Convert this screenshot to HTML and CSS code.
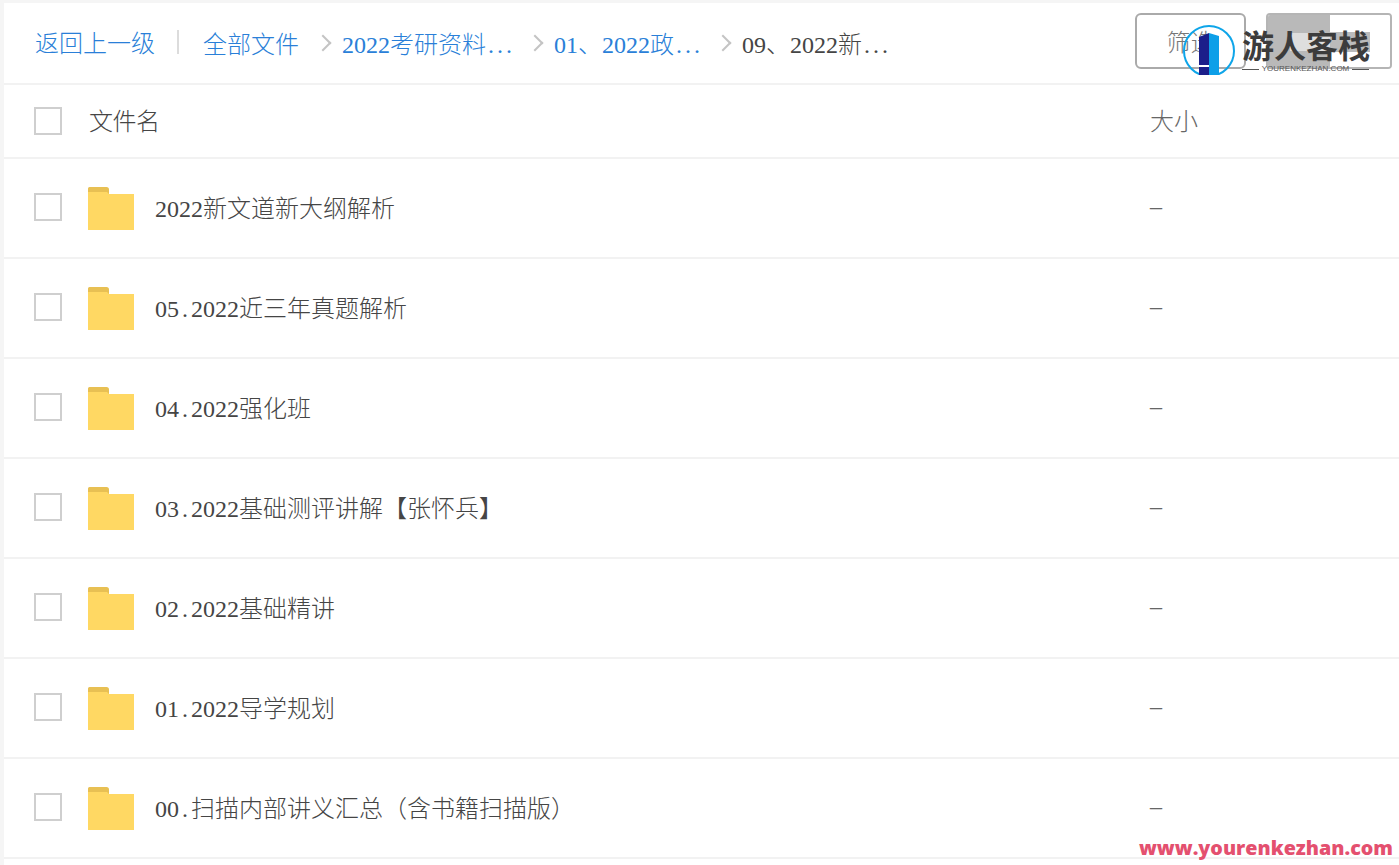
FILE: index.html
```html
<!DOCTYPE html>
<html>
<head>
    <meta charset="utf-8">
    <title>全部文件</title>
    <link rel="stylesheet" href="styles.css">
</head>
<body>
	<svg class="defs">
		<symbol id="folder" viewBox="0 0 46 43"><path fill="#e8c053" d="M0 1.500a1.500 1.500 0 0 1 1.500-1.500h17a2.500 2.500 0 0 1 2.500 2.500v4.500H0z"/><path fill="#ffd863" d="M0 5h19l2 2h25v36H0z"/></symbol>
	</svg>
	<div class="page">
		<div class="crumbs">
			<a class="link back" href="#">返回上一级</a>
			<a class="link all" href="#">全部文件</a>
			<i class="arrow"></i>
			<a class="link" href="#"><span class="en">2022</span>考研资料<span class="dots">...</span></a>
			<i class="arrow"></i>
			<a class="link" href="#"><span class="en">01</span>、<span class="en">2022</span>政<span class="dots">...</span></a>
			<i class="arrow"></i>
			<span class="current"><span class="en">09</span>、<span class="en">2022</span>新<span class="dots">...</span></span>
			<div class="tools">
				<a class="filter" href="#">筛选</a>
				<div class="switch">
					<span class="switch-on"><i class="switch-bar"></i></span>
					<span class="switch-off"><i class="switch-block"></i></span>
				</div>
			</div>
		</div>
		<div class="row head">
			<span class="check"></span>
			<span class="name">文件名</span>
			<span class="size">大小</span>
		</div>
		<div class="row">
			<span class="check"></span>
			<svg class="folder"><use href="#folder"/></svg>
			<span class="name"><span class="en">2022</span>新文道新大纲解析</span>
			<span class="size en">–</span>
		</div>
		<div class="row">
			<span class="check"></span>
			<svg class="folder"><use href="#folder"/></svg>
			<span class="name"><span class="en">05<span class="dot">.</span>2022</span>近三年真题解析</span>
			<span class="size en">–</span>
		</div>
		<div class="row">
			<span class="check"></span>
			<svg class="folder"><use href="#folder"/></svg>
			<span class="name"><span class="en">04<span class="dot">.</span>2022</span>强化班</span>
			<span class="size en">–</span>
		</div>
		<div class="row">
			<span class="check"></span>
			<svg class="folder"><use href="#folder"/></svg>
			<span class="name"><span class="en">03<span class="dot">.</span>2022</span>基础测评讲解【张怀兵】</span>
			<span class="size en">–</span>
		</div>
		<div class="row">
			<span class="check"></span>
			<svg class="folder"><use href="#folder"/></svg>
			<span class="name"><span class="en">02<span class="dot">.</span>2022</span>基础精讲</span>
			<span class="size en">–</span>
		</div>
		<div class="row">
			<span class="check"></span>
			<svg class="folder"><use href="#folder"/></svg>
			<span class="name"><span class="en">01<span class="dot">.</span>2022</span>导学规划</span>
			<span class="size en">–</span>
		</div>
		<div class="row">
			<span class="check"></span>
			<svg class="folder"><use href="#folder"/></svg>
			<span class="name"><span class="en">00<span class="dot">.</span></span>扫描内部讲义汇总（含书籍扫描版）</span>
			<span class="size en">–</span>
		</div>
	</div>
	<div class="logo">
		<svg class="logo-mark" viewBox="0 0 52 50"><circle fill="none" stroke="#0ea5e9" stroke-width="2" cx="26" cy="26" r="25"/><path fill="#1c1f8a" d="M16 12l10-4v42H16z"/><path fill="#0d9fe8" d="M26 8l10 3v39H26z"/><path fill="#fff" d="M16 40h10v2H16z"/></svg>
		<div class="logo-text">
			<div class="logo-cn">游人客栈</div>
			<div class="logo-en">YOURENKEZHAN.COM</div>
		</div>
	</div>
	<div class="site">www.yourenkezhan.com</div>
</body>
</html>
```

FILE: styles.css
```css
html, body { height: 100%; }
body { margin: 0; background: #f5f5f5; font-family: "Noto Sans CJK SC", "Liberation Serif", sans-serif; font-size: 24px; font-weight: 300; color: #454545; overflow: hidden; }
a { text-decoration: none; }
.defs { display: none; }
.en { font-family: "Liberation Serif", serif; font-weight: 400; }
.dot { display: inline-block; width: 12px; text-align: center; }
.dots { margin-left: 2px; padding-right: 7px; font-family: "Liberation Serif", serif; font-weight: 400; letter-spacing: 3px; }
.page { margin: 3px 0 0 4px; background: #fff; height: 862px; }

.crumbs { display: flex; align-items: center; height: 80px; padding-left: 31px; border-bottom: 2px solid #f2f2f2; }
.crumbs > * { margin-bottom: 2px; }
.link { color: #2a7fd8; white-space: nowrap; }
.back { padding-right: 22px; border-right: 2px solid #dcdcdc; line-height: 24px; }
.all { margin-left: 24px; }
.arrow { width: 10px; height: 10px; margin: 0 13px 0 7px; border-top: 2px solid #c4c4c4; border-right: 2px solid #c4c4c4; transform: rotate(45deg); flex: none; }
.all + .arrow { margin-left: 18px; }
.current { white-space: nowrap; }
.tools { display: flex; align-self: flex-start; margin: 10px 7px 0 auto; gap: 20px; }
.filter { width: 107px; height: 52px; border: 2px solid #aaa; border-radius: 6px; text-align: center; line-height: 52px; color: #777; background: #fff; }
.switch { display: flex; width: 122px; height: 52px; border: 2px solid #b5b5b5; border-radius: 4px; overflow: hidden; }
.switch-on { display: flex; align-items: center; justify-content: flex-end; width: 62px; background: #b9b9b9; }
.switch-bar { flex: none; width: 40px; height: 18px; margin-top: 2px; background: #dedede; }
.switch-off { display: flex; align-items: center; flex: 1; background: #fff; }
.switch-block { flex: none; width: 40px; height: 20px; margin-top: 2px; background: #bbb; }

.row { display: flex; align-items: center; height: 98px; border-bottom: 2px solid #f2f2f2; padding-left: 30px; }
.row.head { height: 72px; }
.check { width: 24px; height: 24px; margin-bottom: 2px; border: 2px solid #cfcfcf; flex: none; background: #fff; }
.head .check { margin-bottom: 0; }
.folder { width: 46px; height: 43px; margin-left: 26px; flex: none; }
.name { margin: 0 0 4px 21px; white-space: nowrap; }
.head .name { margin-left: 27px; letter-spacing: -0.5px; }
.size { position: absolute; left: 1150px; margin-bottom: 4px; color: #666; }

.logo { position: absolute; left: 1183px; top: 25px; display: flex; }
.logo-mark { width: 52px; height: 50px; }
.logo-text { margin-left: 7px; width: 127px; }
.logo-cn { font-size: 32px; font-weight: 700; line-height: 38px; color: #3c3c3c; white-space: nowrap; }
.logo-en { display: flex; align-items: center; gap: 3px; margin-top: 1px; font: 8px/10px "Liberation Sans", sans-serif; color: #555; white-space: nowrap; }
.logo-en::before, .logo-en::after { content: ""; flex: 1; height: 1px; background: #555; }
.site { position: absolute; right: 6px; top: 835px; font: 800 19.7px/26px "Open Sans", sans-serif; color: #e4506f; white-space: nowrap; }
```
